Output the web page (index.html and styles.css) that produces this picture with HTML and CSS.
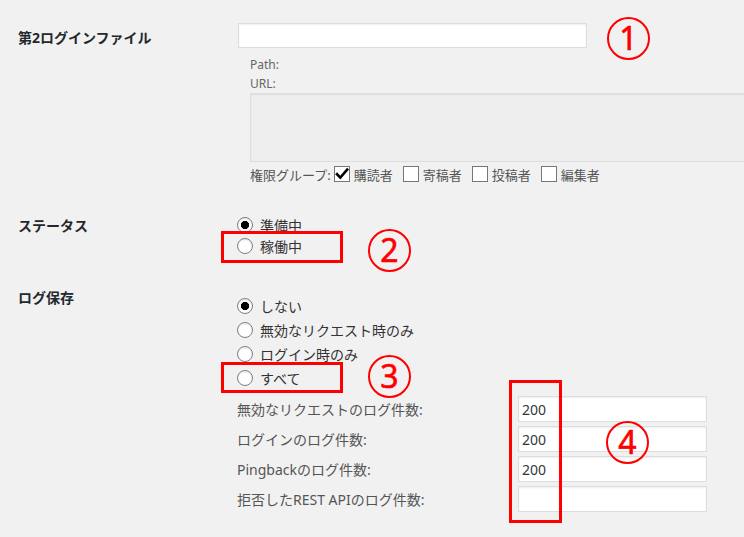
FILE: index.html
```html
<!DOCTYPE html>
<html lang="ja">
<head>
    <meta charset="UTF-8">
    <meta name="viewport" content="width=device-width, initial-scale=1.0">
    <title>ログイン設定</title>
    <link rel="stylesheet" href="styles.css">
</head>
<body>
    <div class="page">
        <!-- 第2ログインファイル -->
        <div class="form-row row-file">
            <div class="field-label">第2ログインファイル</div>
            <div class="field">
                <input type="text" class="text-input text-wide">
                <div class="file-info">
                    <p>Path:</p>
                    <p>URL:</p>
                    <textarea class="file-preview" readonly></textarea>
                    <div class="roles">
                        <span class="roles-title">権限グループ:</span>
                        <label class="role">
                            <span class="check is-checked">
                                <svg width="14" height="14" viewBox="0 0 14 14"><path d="M2 7.2 L5.3 10.6 L12.2 2.6" fill="none" stroke="#000" stroke-width="2.6" stroke-linecap="square"/></svg>
                            </span>購読者
                        </label>
                        <label class="role"><span class="check"></span>寄稿者</label>
                        <label class="role"><span class="check"></span>投稿者</label>
                        <label class="role"><span class="check"></span>編集者</label>
                    </div>
                </div>
            </div>
        </div>

        <!-- ステータス -->
        <div class="form-row row-status">
            <div class="field-label">ステータス</div>
            <div class="field">
                <label class="radio-option"><span class="radio is-checked"></span>準備中</label>
                <label class="radio-option"><span class="radio"></span>稼働中</label>
            </div>
        </div>

        <!-- ログ保存 -->
        <div class="form-row row-log">
            <div class="field-label">ログ保存</div>
            <div class="field">
                <label class="radio-option"><span class="radio is-checked"></span>しない</label>
                <label class="radio-option"><span class="radio"></span>無効なリクエスト時のみ</label>
                <label class="radio-option"><span class="radio"></span>ログイン時のみ</label>
                <label class="radio-option"><span class="radio"></span>すべて</label>
                <div class="log-counts">
                    <span>無効なリクエストのログ件数:</span>
                    <input type="text" class="text-input" value="200">
                    <span>ログインのログ件数:</span>
                    <input type="text" class="text-input" value="200">
                    <span>Pingbackのログ件数:</span>
                    <input type="text" class="text-input" value="200">
                    <span>拒否したREST APIのログ件数:</span>
                    <input type="text" class="text-input" value="">
                </div>
            </div>
        </div>

        <!-- annotations -->
        <div class="mark-box box-2"></div>
        <div class="mark-box box-3"></div>
        <div class="mark-box box-4"></div>
        <div class="mark-num num-1">1</div>
        <div class="mark-num num-2">2</div>
        <div class="mark-num num-3">3</div>
        <div class="mark-num num-4">4</div>
    </div>
</body>
</html>
```

FILE: styles.css
```css
html, body {
    margin: 0;
    padding: 0;
    overflow: hidden;
}
body {
    background-color: #f1f1f1;
    font-family: "Noto Sans", "Noto Sans CJK JP", sans-serif;
    font-size: 14px;
    color: #333;
}
.page {
    position: relative;
    width: 744px;
    height: 537px;
}
.form-row {
    display: grid;
    grid-template-columns: 237px minmax(0, 1fr);
}
.field-label {
    padding-left: 18px;
    font-weight: bold;
    color: #23282d;
    line-height: 20px;
}
.text-input {
    display: block;
    box-sizing: border-box;
    margin: 0;
    padding: 0 3px;
    border: 1px solid #ddd;
    background: #fff;
    box-shadow: inset 0 1px 2px rgba(0,0,0,0.07);
    font-family: "Noto Sans", sans-serif;
    font-size: 14px;
    color: #32373c;
    outline: none;
}

/* row 1 */
.row-file {
    height: 186px;
}
.row-file .field-label {
    padding-top: 28px;
}
.row-file .field {
    padding-top: 23px;
}
.text-wide {
    width: 349px;
    height: 25px;
    margin-left: 1px;
}
.file-info {
    margin-top: 7px;
    padding-left: 13px;
}
.file-info p {
    margin: 0;
    font-size: 12px;
    line-height: 19px;
    color: #666;
}
.file-preview {
    display: block;
    box-sizing: border-box;
    width: 520px;
    height: 69px;
    margin: 0;
    border: 1px solid #ddd;
    background: #eee;
    box-shadow: inset 0 1px 2px rgba(0,0,0,0.07);
    resize: none;
}
.roles {
    display: flex;
    align-items: center;
    height: 24px;
    font-size: 13px;
    color: #555;
}
.roles-title {
    margin-right: 3px;
}
.role {
    display: flex;
    align-items: center;
    gap: 4px;
    margin-right: 10px;
}
.check {
    display: flex;
    align-items: center;
    justify-content: center;
    box-sizing: border-box;
    width: 16px;
    height: 16px;
    border: 1px solid #777;
    background: #fff;
}

/* radios */
.radio-option {
    display: flex;
    align-items: center;
    gap: 7px;
    height: 24px;
    color: #333;
}
.radio {
    box-sizing: border-box;
    width: 16px;
    height: 16px;
    border: 1px solid #7e7e7e;
    border-radius: 50%;
    background: #fff;
    box-shadow: inset 0 1px 2px rgba(0,0,0,0.1);
}
.radio.is-checked {
    background: radial-gradient(circle, #000 0 3.8px, #fff 4.4px);
}

/* row 2 */
.row-status {
    height: 69px;
}
.row-status .field-label {
    padding-top: 30px;
}
.row-status .field {
    padding-top: 29px;
}
.row-status .radio-option {
    height: 20px;
}
.row-status .radio-option + .radio-option {
    padding-top: 1px;
}

/* row 3 */
.row-log .field-label {
    padding-top: 33px;
}
.row-log .field {
    padding-top: 39px;
}
.log-counts {
    display: grid;
    grid-template-columns: 281px 189px;
    grid-auto-rows: 26px;
    row-gap: 4px;
    align-items: center;
    margin-top: 6px;
    color: #555;
}
.log-counts .text-input {
    height: 26px;
    width: 189px;
}

/* red annotations */
.mark-box {
    position: absolute;
    box-sizing: border-box;
    border: 3px solid #f00;
}
.box-2 {
    left: 221px;
    top: 231px;
    width: 122px;
    height: 32px;
}
.box-3 {
    left: 221px;
    top: 362px;
    width: 122px;
    height: 31px;
}
.box-4 {
    left: 509px;
    top: 380px;
    width: 53px;
    height: 143px;
}
.mark-num {
    position: absolute;
    box-sizing: border-box;
    width: 43px;
    height: 43px;
    border: 2px solid #f00;
    border-radius: 50%;
    color: #f00;
    font-family: "Noto Sans", sans-serif;
    font-size: 32px;
    line-height: 37px;
    text-align: center;
    -webkit-text-stroke: 0.6px #f00;
}
.num-1 {
    left: 607px;
    top: 17px;
}
.num-2 {
    left: 368px;
    top: 229px;
}
.num-3 {
    left: 368px;
    top: 355px;
}
.num-4 {
    left: 606px;
    top: 421px;
}
```
